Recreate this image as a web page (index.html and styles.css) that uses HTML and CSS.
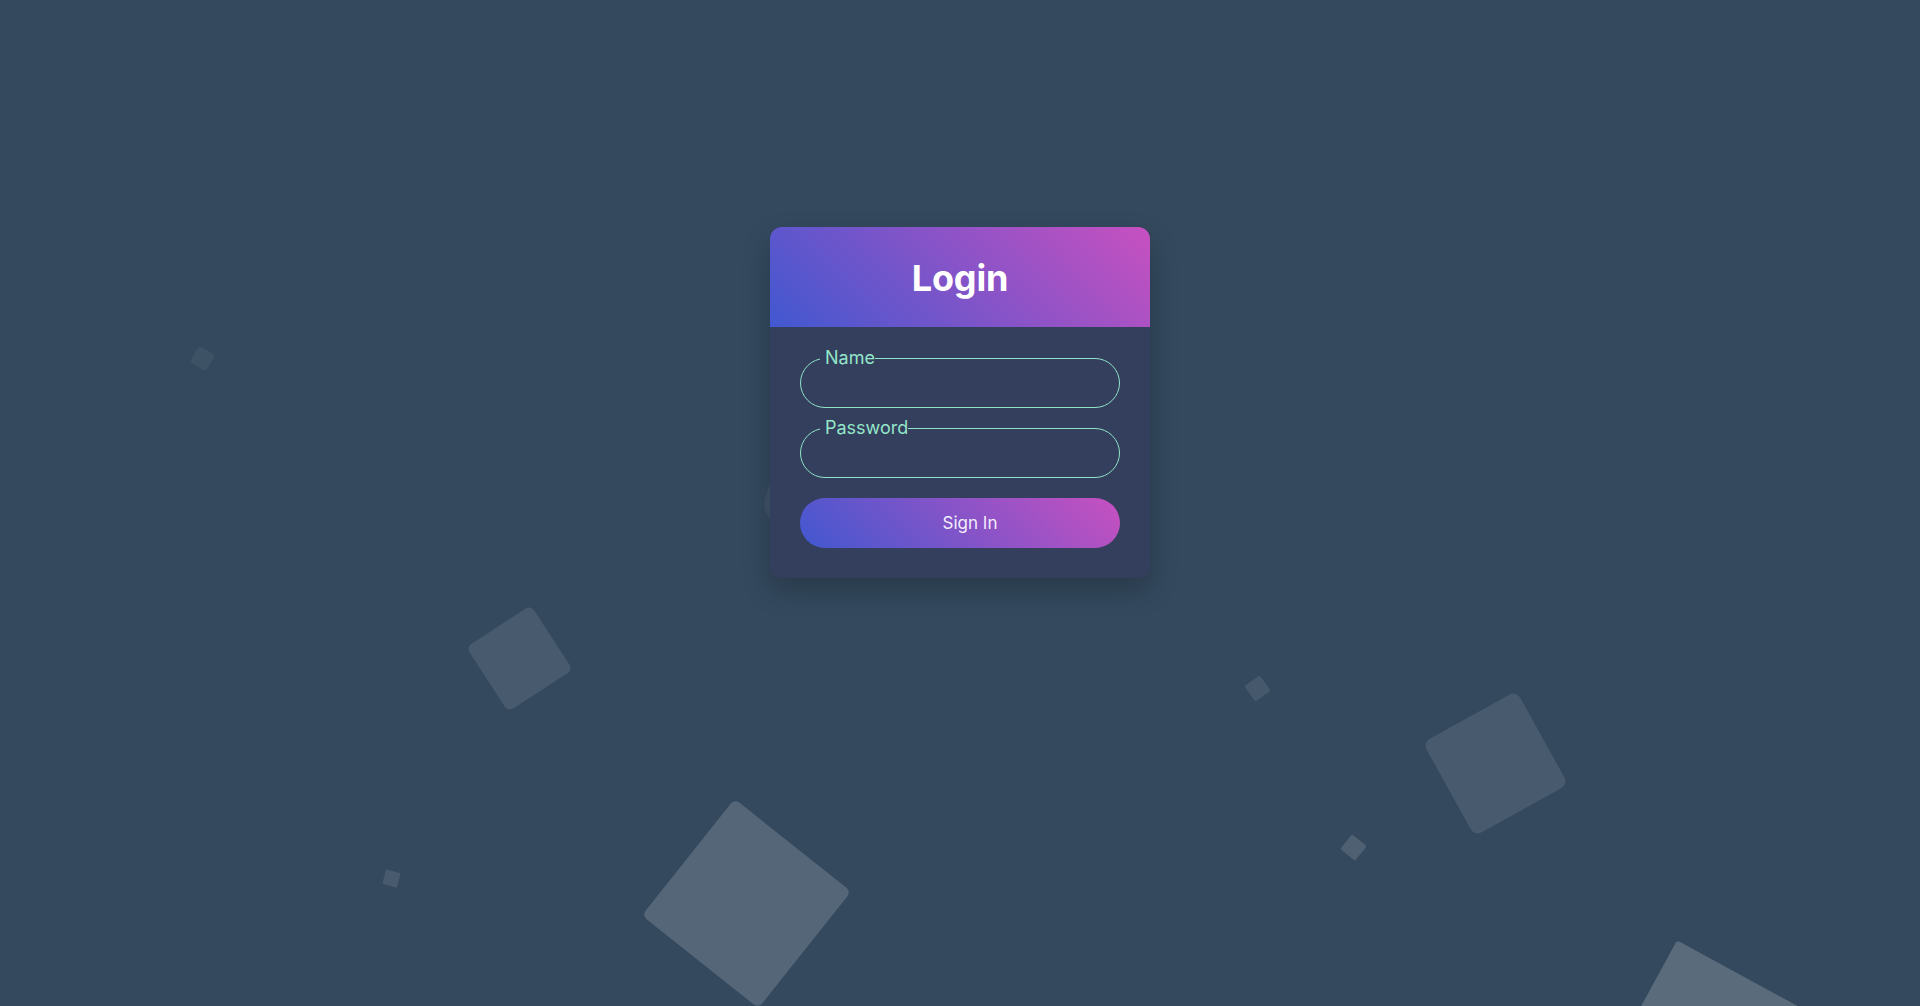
FILE: index.html
```html
<!DOCTYPE html>
<html lang="en">
<head>
<meta charset="utf-8">
<title>Login</title>
<link rel="stylesheet" href="styles.css">
</head>
<body>
<div class="squares" aria-hidden="true">
  <div class="sq sq-a"></div>
  <div class="sq sq-b"></div>
  <div class="sq sq-c"></div>
  <div class="sq sq-d"></div>
  <div class="sq sq-e"></div>
  <div class="sq sq-f"></div>
  <div class="sq sq-g"></div>
  <div class="sq sq-h"></div>
  <div class="sq sq-i"></div>
</div>
<main class="page">
  <form class="card">
    <div class="card-head">
      <h1 class="title">Login</h1>
    </div>
    <div class="card-body">
      <fieldset class="field">
        <legend class="field-label">Name</legend>
        <input class="field-input" type="text">
      </fieldset>
      <fieldset class="field field-next">
        <legend class="field-label">Password</legend>
        <input class="field-input" type="password">
      </fieldset>
      <button class="btn" type="button">Sign In</button>
    </div>
  </form>
</main>
</body>
</html>
```
FILE: styles.css
```css
* { box-sizing: border-box; }

html, body {
  margin: 0;
  height: 100%;
}

body {
  background: #34495e;
  font-family: Inter, "Noto Sans", sans-serif;
  overflow: hidden;
  position: relative;
}

.squares {
  position: absolute;
  inset: 0;
  overflow: hidden;
  z-index: 0;
}

.sq {
  position: absolute;
  background: rgba(255, 255, 255, 0.1);
}

.sq-a { left: 193px; top: 349px; width: 19px; height: 19px; transform: rotate(30deg); background: rgba(255,255,255,0.05); border-radius: 4px; }
.sq-b { left: 481px; top: 620px; width: 77px; height: 77px; transform: rotate(-33deg); background: rgba(255,255,255,0.1); border-radius: 6px; }
.sq-c { left: 672px; top: 829px; width: 149px; height: 149px; transform: rotate(38.5deg); background: rgba(255,255,255,0.16); border-radius: 6px; }
.sq-d { left: 384px; top: 871px; width: 15px; height: 15px; transform: rotate(15deg); background: rgba(255,255,255,0.1); border-radius: 1px; }
.sq-e { left: 1248px; top: 679px; width: 19px; height: 19px; transform: rotate(-35.5deg); background: rgba(255,255,255,0.09); border-radius: 2px; }
.sq-f { left: 1344px; top: 838px; width: 19px; height: 19px; transform: rotate(39deg); background: rgba(255,255,255,0.13); border-radius: 2px; }
.sq-g { left: 1442px; top: 710px; width: 107px; height: 107px; transform: rotate(-29deg); background: rgba(255,255,255,0.1); border-radius: 8px; }
.sq-h { left: 1632px; top: 967px; width: 150px; height: 150px; transform: rotate(28.6deg); background: rgba(255,255,255,0.19); border-radius: 3px; }
.sq-i { left: 766px; top: 470px; width: 60px; height: 60px; transform: rotate(20deg); background: rgba(255,255,255,0.05); border-radius: 40%; }

.page {
  position: relative;
  z-index: 1;
  display: flex;
  justify-content: center;
  padding-top: 227px;
}

.card {
  width: 380px;
  background: #343e5d;
  border-radius: 12px;
  overflow: hidden;
  box-shadow: 0 12px 28px rgba(0, 0, 0, 0.22);
}

.card-head {
  height: 100px;
  display: flex;
  align-items: center;
  justify-content: center;
  background: linear-gradient(45deg, #4158d0, #c850c0);
}

.title {
  margin: 0;
  padding-top: 2px;
  color: #ffffff;
  font-size: 36px;
  font-weight: 700;
  line-height: 1;
  letter-spacing: -0.2px;
}

.card-body {
  display: flex;
  flex-direction: column;
  padding: 18px 30px 30px;
}

.field {
  margin: 0;
  border: 1px solid #8fe4c7;
  border-radius: 25px;
  padding: 0 24px 0 19px;
  min-width: 0;
}

.field-next {
  margin-top: 7px;
}

.field-label {
  padding: 0 0 0 5px;
  color: #93e6c9;
  font-size: 18px;
  line-height: 26px;
  font-weight: 400;
}

.field-input {
  display: block;
  width: 100%;
  height: 36px;
  border: none;
  outline: none;
  background: transparent;
  padding: 0;
  color: #ffffff;
  font-family: inherit;
  font-size: 16px;
}

.btn {
  margin-top: 20px;
  height: 50px;
  border: none;
  border-radius: 25px;
  background: linear-gradient(45deg, #4158d0, #c850c0);
  color: rgba(255, 255, 255, 0.92);
  font-family: inherit;
  font-size: 17px;
  font-weight: 400;
  padding: 0 0 0 20px;
  cursor: pointer;
}
```
